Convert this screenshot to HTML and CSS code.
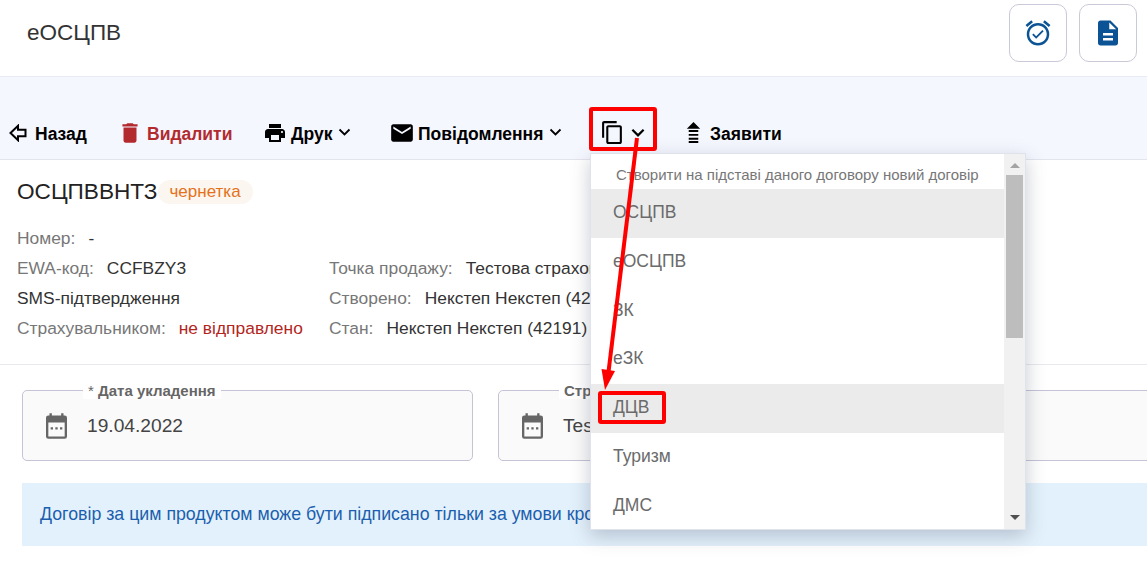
FILE: index.html
```html
<!DOCTYPE html>
<html lang="uk">
<head>
<meta charset="utf-8">
<title>еОСЦПВ</title>
<link rel="stylesheet" href="styles.css">
</head>
<body>
<div class="page">
  <header class="topbar">
    <h1 class="app-title">еОСЦПВ</h1>
    <div class="top-actions">
      <button class="square-btn"><svg class="icon-alarm" viewBox="0 0 24 24"><path d="M10.54 14.53 8.41 12.4l-1.06 1.06 3.18 3.18 6-6-1.06-1.06zm6.797-12.72 4.607 3.845-1.28 1.535-4.61-3.843zm-10.674 0 1.282 1.536L3.337 7.19l-1.28-1.536zM12 4a9 9 0 1 0 .001 18.001A9 9 0 0 0 12 4zm0 16c-3.86 0-7-3.14-7-7s3.14-7 7-7 7 3.14 7 7-3.14 7-7 7z"/></svg></button>
      <button class="square-btn"><svg class="icon-doc" viewBox="0 0 24 24"><path d="M14 2H6c-1.1 0-1.99.9-1.99 2L4 20c0 1.1.89 2 1.99 2H18c1.1 0 2-.9 2-2V8l-6-6zm2 16H8v-2h8v2zm0-4H8v-2h8v2zm-3-5V3.5L18.5 9H13z"/></svg></button>
    </div>
  </header>

  <nav class="toolbar">
    <a class="tool tool-back"><svg class="ic-back" viewBox="0 0 18 18"><path d="M1.500 9 9 1.800V5.700h7.500v6.600H9v3.900z"/></svg>Назад</a>
    <a class="tool tool-del"><svg class="ic-del" viewBox="0 0 24 24"><path d="M6 19c0 1.100.9 2 2 2h8c1.100 0 2-.9 2-2V7H6v12zM19 4h-3.500l-1-1h-5l-1 1H5v2h14V4z"/></svg>Видалити</a>
    <a class="tool tool-print"><svg class="ic-24" viewBox="0 0 24 24"><path d="M19 8H5c-1.660 0-3 1.340-3 3v6h4v4h12v-4h4v-6c0-1.660-1.340-3-3-3zm-3 11H8v-5h8v5zm3-7c-.55 0-1-.45-1-1s.45-1 1-1 1 .45 1 1-.45 1-1 1zm-1-9H6v4h12V3z"/></svg>Друк<svg class="chev" viewBox="0 0 12 8"><path d="M1 1.500 6 6.500l5-5"/></svg></a>
    <a class="tool tool-msg"><svg class="ic-mail" viewBox="0 0 24 24"><path d="M20 4H4c-1.100 0-1.990.9-1.990 2L2 18c0 1.100.9 2 2 2h16c1.100 0 2-.9 2-2V6c0-1.100-.9-2-2-2zm0 4l-8 5-8-5V6l8 5 8-5v2z"/></svg>Повідомлення<svg class="chev" viewBox="0 0 12 8"><path d="M1 1.500 6 6.500l5-5"/></svg></a>
    <a class="tool tool-copy"><svg class="ic-copy" viewBox="0 0 24 24"><path d="M16 1H4c-1.100 0-2 .9-2 2v14h2V3h12V1zm3 4H8c-1.100 0-2 .9-2 2v14c0 1.100.9 2 2 2h11c1.100 0 2-.9 2-2V7c0-1.100-.9-2-2-2zm0 16H8V7h11v14z"/></svg><svg class="chev chev-copy" viewBox="0 0 12 8"><path d="M1 1.500 6 6.500l5-5"/></svg></a>
    <a class="tool tool-send"><svg class="ic-send" viewBox="0 0 15 22"><path d="M7.500 0 14.500 7H.5zM2.500 8.500h10v2h-10zM2.500 12.500h10v2h-10zM2.500 16.500h10v2h-10zM2.500 20h10v2h-10z"/></svg>Заявити</a>
  </nav>

  <section class="summary">
    <div class="title-row">
      <h2 class="doc-title">ОСЦПВВНТЗ</h2>
      <span class="badge">чернетка</span>
    </div>
    <div class="facts">
      <div class="fact"><span class="lbl">Номер:</span><span class="val">-</span></div>
      <div class="fact"></div>
      <div class="fact"><span class="lbl">EWA-код:</span><span class="val">CCFBZY3</span></div>
      <div class="fact"><span class="lbl">Точка продажу:</span><span class="val">Тестова страхова компанія</span></div>
      <div class="fact"><span class="plain">SMS-підтвердження</span></div>
      <div class="fact"><span class="lbl">Створено:</span><span class="val">Некстеп Некстеп (42191)</span></div>
      <div class="fact"><span class="lbl">Страхувальником:</span><span class="val val-red">не відправлено</span></div>
      <div class="fact"><span class="lbl">Стан:</span><span class="val">Некстеп Некстеп (42191)</span></div>
    </div>
  </section>

  <section class="form-row">
    <div class="field">
      <span class="legend"><i class="req">*</i> Дата укладення</span>
      <svg class="ic-cal" viewBox="0 0 24 24"><path d="M18 3V1h-2v2H8V1H6v2H5a2 2 0 0 0-2 2v16a2 2 0 0 0 2 2h14a2 2 0 0 0 2-2V5a2 2 0 0 0-2-2zm1 18H5V9h14zM7 13h2v2H7zm4 0h2v2h-2zm4 0h2v2h-2z"/></svg>
      <span class="field-val">19.04.2022</span>
    </div>
    <div class="field">
      <span class="legend">Страховик</span>
      <svg class="ic-cal" viewBox="0 0 24 24"><path d="M18 3V1h-2v2H8V1H6v2H5a2 2 0 0 0-2 2v16a2 2 0 0 0 2 2h14a2 2 0 0 0 2-2V5a2 2 0 0 0-2-2zm1 18H5V9h14zM7 13h2v2H7zm4 0h2v2h-2zm4 0h2v2h-2z"/></svg>
      <span class="field-val">Test</span>
    </div>
  </section>

  <div class="notice">Договір за цим продуктом може бути підписано тільки за умови крос-підпису</div>
</div>

<div class="dropdown">
  <div class="dd-list">
    <div class="dd-head">Створити на підставі даного договору новий договір</div>
    <div class="dd-item dd-hover">ОСЦПВ</div>
    <div class="dd-item">еОСЦПВ</div>
    <div class="dd-item">ЗК</div>
    <div class="dd-item">еЗК</div>
    <div class="dd-item dd-hover">ДЦВ</div>
    <div class="dd-item">Туризм</div>
    <div class="dd-item">ДМС</div>
  </div>
  <div class="dd-scroll">
    <span class="sb-up"></span>
    <span class="sb-thumb"></span>
    <span class="sb-down"></span>
  </div>
</div>

<span class="mark mark-copy"></span>
<span class="mark mark-dcv"></span>
<svg class="mark-arrow" viewBox="0 0 1147 569"><path d="M637 138 608 376" /><polygon points="605,390 601.500,369 615,371"/></svg>
</body>
</html>
```
FILE: styles.css
```css
* { box-sizing: border-box; }
html, body { margin: 0; height: 569px; overflow: hidden; background: #fff; }
body { font-family: "Liberation Sans", Arial, sans-serif; color: #222; position: relative; }
.page { width: 1147px; height: 569px; overflow: hidden; }

.topbar { height: 77px; display: flex; justify-content: space-between; padding: 4px 10px 0 27px; border-bottom: 1px solid #eaeaf6; }
.app-title { margin: 15px 0 0; font-size: 22.500px; font-weight: 400; line-height: 28px; color: #333; }
.top-actions { display: flex; gap: 12px; align-items: flex-start; }
.square-btn { width: 58px; height: 58px; border: 1px solid #c9c9d8; border-radius: 10px; background: #fff; display: flex; align-items: center; justify-content: center; padding: 0; }
.icon-alarm { width: 30px; height: 30px; fill: #0b5394; }
.icon-doc { width: 30px; height: 30px; fill: #0b5394; }

.toolbar { height: 83px; background: #f5f7ff; border-bottom: 1px solid #e4e4ee; display: flex; align-items: flex-end; padding: 0 0 13px 9px; }
.tool { display: flex; align-items: center; height: 24px; font-size: 17.500px; font-weight: 700; color: #000; white-space: nowrap; }
.tool svg { flex: none; }
.tool-back { width: 113px; }
.ic-back { width: 18px; height: 18px; margin-right: 8px; margin-top: -3px; fill: none; stroke: #000; stroke-width: 2; }
.tool-del { width: 143px; color: #b22a2e; }
.ic-del { width: 26px; height: 26px; margin: -3px 4px 0 -5px; fill: #b22a2e; }
.tool-print { width: 126px; }
.ic-24 { width: 24px; height: 24px; margin: -3px 4px 0 -2px; fill: #000; }
.chev { width: 13px; height: 8px; margin: -4px 0 0 6px; fill: none; stroke: #000; stroke-width: 1.800; }
.tool-msg { width: 211px; }
.ic-mail { width: 26px; height: 26px; margin: -3px 3px 0 -2px; fill: #000; }
.tool-copy { width: 84px; }
.ic-copy { width: 25px; height: 25px; margin: -3px 0 0 -2px; fill: #000; }
.chev-copy { width: 14px; height: 9px; margin: -4px 0 0 6px; stroke-width: 2; }
.ic-send { width: 15px; height: 21px; margin: -4px 9px 0 0; fill: #000; }

.summary { height: 205px; border-bottom: 1px solid #e8e8ee; padding: 20px 17px 0; }
.title-row { display: flex; align-items: center; height: 24px; }
.doc-title { margin: 0; font-size: 22.600px; font-weight: 400; color: #222; line-height: 24px; }
.badge { height: 24px; line-height: 24px; padding: 0 12px; border-radius: 12px; background: #fcf6f0; color: #e5711a; font-size: 17px; }
.facts { display: grid; grid-template-columns: 312px 1fr; grid-auto-rows: 30px; margin-top: 19px; font-size: 17.400px; line-height: 30px; }
.fact { white-space: nowrap; overflow: hidden; }
.lbl { color: #777; margin-right: 13px; }
.val { color: #333; }
.val-red { color: #b3261e; }
.plain { color: #333; }

.form-row { display: grid; grid-template-columns: 451px 700px; gap: 25px; padding: 25px 0 0 22px; }
.field { position: relative; height: 71px; background: #fafafa; border: 1px solid #c5c3d6; border-radius: 5px; display: flex; align-items: center; padding-left: 21px; }
.legend { position: absolute; top: -8px; left: 60px; padding: 0 5px; line-height: 16px; background: #fff; font-size: 15px; font-weight: 700; color: #666; white-space: nowrap; }
.req { font-style: normal; font-weight: 400; }
.ic-cal { width: 29px; height: 28px; margin-left: -2px; fill: #666; flex: none; }
.field-val { margin-left: 16px; font-size: 19.200px; color: #444; }

.notice { margin: 22px 0 0 22px; width: 1200px; height: 63px; background: #e3f1fc; color: #1b5fae; font-size: 17.750px; line-height: 62px; padding-left: 18px; white-space: nowrap; }

.dropdown { position: absolute; left: 590px; top: 153px; width: 436px; height: 377px; background: #fff; border: 1px solid #dfe3ec; display: flex; box-shadow: 0 6px 18px rgba(60, 70, 90, .28); }
.dd-list { width: 413px; flex: none; overflow: hidden; }
.dd-head { height: 35px; padding: 13px 0 0 25px; font-size: 15px; line-height: 16px; color: #777; white-space: nowrap; }
.dd-item { height: 48.800px; line-height: 47px; padding-left: 22px; font-size: 17.500px; color: #6b6b6b; }
.dd-hover { background: #ebebeb; }
.dd-scroll { position: relative; flex: 1; background: #f1f1f1; }
.sb-thumb { position: absolute; left: 2px; top: 21px; width: 17px; height: 163px; background: #bdbdbd; }
.sb-up { position: absolute; left: 5.500px; top: 9px; width: 0; height: 0; border-left: 5px solid transparent; border-right: 5px solid transparent; border-bottom: 5px solid #a3a3a3; }
.sb-down { position: absolute; left: 5.500px; top: 361px; width: 0; height: 0; border-left: 5px solid transparent; border-right: 5px solid transparent; border-top: 5px solid #505050; }

.mark { position: absolute; border: 4px solid #f00; border-radius: 3px; }
.mark-copy { left: 589px; top: 107px; width: 68px; height: 44px; }
.mark-dcv { left: 598px; top: 391px; width: 68px; height: 33px; }
.mark-arrow { position: absolute; left: 0; top: 0; width: 1147px; height: 569px; pointer-events: none; }
.mark-arrow path { stroke: #f00; stroke-width: 4; fill: none; }
.mark-arrow polygon { fill: #f00; }
```
